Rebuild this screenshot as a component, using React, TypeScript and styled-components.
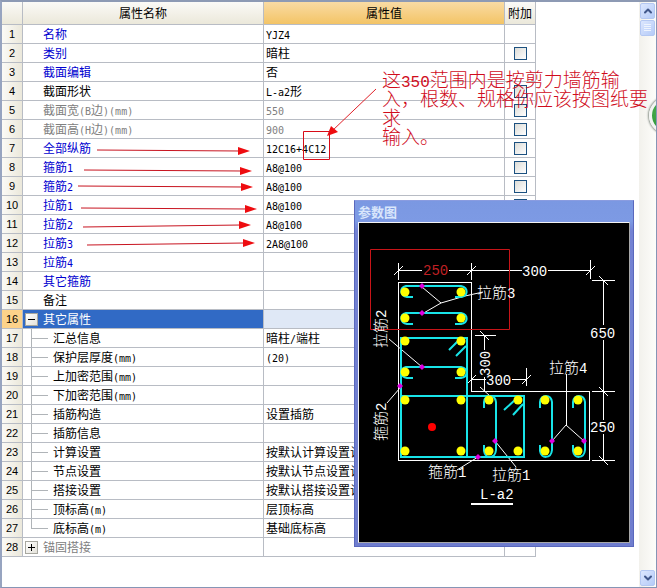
import React, { useState } from "react";
import styled, { createGlobalStyle, css } from "styled-components";
import { ChevronDown, ChevronUp } from "lucide-react";

const GlobalStyle = createGlobalStyle`
  * { box-sizing: border-box; }
  body {
    margin: 0;
    background: #fff;
    font-family: "Noto Sans CJK SC", "Liberation Sans", sans-serif;
    font-size: 12px;
    color: #000;
  }
`;

const Frame = styled.div`
  position: relative;
  display: flex;
  min-height: 100vh;
  overflow: hidden;
  border: 1px solid #8695b5;
  border-top: 2px solid #8d9ab4;
  border-left: 2px solid #97a4c0;
`;

const GridPane = styled.main`
  flex: 1;
  min-width: 0;
`;

const PropertyTable = styled.table`
  width: calc(100% - 103px);
  table-layout: fixed;
  border-spacing: 0;
  line-height: 18px;
`;

const NumberCol = styled.col`
  width: 21px;
`;

const ExtraCol = styled.col`
  width: 31px;
`;

const cellBase = css`
  height: 19px;
  padding: 0;
  border-right: 1px solid #b8bcc4;
  border-bottom: 1px solid #b8bcc4;
  white-space: nowrap;
  overflow: hidden;
  font-weight: 400;
`;

const HeadCell = styled.th<{ $active?: boolean }>`
  ${cellBase}
  height: 23px;
  background: ${(p) =>
    p.$active
      ? "linear-gradient(#f9dba4, #f3c466)"
      : "linear-gradient(#fbfaf7, #ebe8da)"};
`;

const NumberCell = styled.th<{ $active?: boolean }>`
  ${cellBase}
  background: ${(p) =>
    p.$active ? "#fcd28a" : "linear-gradient(90deg, #fbfaf6, #ebe8db)"};
  font-family: "Liberation Sans", sans-serif;
  font-size: 11px;
`;

type Tone = "blue" | "black" | "gray";
const tones: Record<Tone, string> = {
  blue: "#0000d0",
  black: "#000",
  gray: "#808080",
};

const NameCell = styled.td<{ $tone: Tone; $active?: boolean }>`
  ${cellBase}
  background: ${(p) => (p.$active ? "#316ac5" : "#fff")};
  color: ${(p) => (p.$active ? "#fff" : tones[p.$tone])};
`;

const NameLine = styled.div`
  display: flex;
  align-items: center;
  height: 18px;
`;

const Gutter = styled.span`
  display: flex;
  justify-content: center;
  flex: 0 0 20px;
  padding-right: 3px;
`;

const Branch = styled.span<{ $last?: boolean }>`
  flex: 0 0 30px;
  height: 19px;
  background:
    linear-gradient(#b0b4b8, #b0b4b8) 8px 9px / 17px 1px no-repeat,
    linear-gradient(#b0b4b8, #b0b4b8) 8px 0 / 1px ${(p) => (p.$last ? "10px" : "19px")} no-repeat;
`;

const Expander = styled.button`
  width: 13px;
  height: 13px;
  padding: 0;
  display: grid;
  place-items: center;
  border: 1px solid #a8a8a0;
  background: linear-gradient(135deg, #fff, #e4e2da);
`;

const ValueCell = styled.td<{ $tone: Tone; $active?: boolean }>`
  ${cellBase}
  padding-left: 2px;
  padding-bottom: 1px;
  line-height: 17px;
  background: ${(p) => (p.$active ? "#dfe8f6" : "#fff")};
  color: ${(p) => tones[p.$tone]};
`;

const ExtraCell = styled.td`
  ${cellBase}
`;

const CheckBox = styled.input`
  appearance: none;
  display: block;
  width: 13px;
  height: 13px;
  margin: 1px auto 0;
  border: 1px solid #1c5180;
  background: linear-gradient(135deg, #dcdcd7, #fff);
  &:checked {
    background: #1c5180;
  }
`;

const Latin = styled.span`
  font-family: "DejaVu Sans Mono", monospace;
  font-size: 10px;
  line-height: 1;
`;

function Mixed({ text }: { text: string }) {
  const parts = text.split(/([\x20-\x7e]+)/).filter(Boolean);
  return (
    <>
      {parts.map((part, i) =>
        /^[\x20-\x7e]/.test(part) ? (
          <Latin key={i}>{part}</Latin>
        ) : (
          <React.Fragment key={i}>{part}</React.Fragment>
        ),
      )}
    </>
  );
}

const ScrollBar = styled.aside`
  flex: 0 0 17px;
  display: flex;
  flex-direction: column;
  background: linear-gradient(90deg, #f2f1ec, #fdfdfa);
`;

const ScrollButton = styled.button`
  width: 15px;
  height: 16px;
  margin: 1px;
  padding: 0;
  display: grid;
  place-items: center;
  color: #41578a;
  border: 1px solid #b4c8f2;
  border-radius: 2px;
  background: linear-gradient(135deg, #dce7fe, #b5cbf8);
`;

const ScrollThumb = styled(ScrollButton)`
  margin-top: 0;
`;

const ScrollTrack = styled.div`
  flex: 1;
`;

const Overlay = styled.svg`
  position: absolute;
  left: -2px;
  top: -2px;
  pointer-events: none;
`;

const Note = styled.p`
  position: absolute;
  left: 380px;
  top: 67px;
  margin: 0;
  font-size: 19px;
  font-weight: 300;
  line-height: 19px;
  color: #d00c1c;
  white-space: nowrap;
`;

const NoteLine = styled.span`
  display: block;
  height: 19px;
`;

const NoteNumber = styled.span`
  font-family: "Liberation Mono", monospace;
  font-size: 16px;
  line-height: 0;
`;

const FloatButton = styled.button`
  position: absolute;
  right: -30px;
  top: 95px;
  width: 37px;
  height: 37px;
  padding: 0;
  border: 3px solid #f2f4f2;
  border-radius: 50%;
  background: radial-gradient(circle at 40% 35%, #55b556, #1f8a2c);
  box-shadow: 0 0 2px 1px #8c948c;
`;

const Dialog = styled.section`
  position: absolute;
  left: 352px;
  top: 198px;
  width: 280px;
  padding: 0 3px 3px;
  border: 1px solid #5a68bd;
  border-top-color: #8a9ce0;
  background: linear-gradient(#7b98e2, #7d9ae4 20px, #7382d3 30px, #6f7dce);
`;

const DialogTitle = styled.h2`
  margin: 0;
  height: 21px;
  font-size: 13px;
  font-weight: 700;
  line-height: 22px;
  color: #d9e6fb;
`;

const Drawing = styled.svg`
  display: block;
  width: 100%;
  background: #000;
  border-top: 1px solid #f4f4f4;
  border-left: 1px solid #f4f4f4;
  border-right: 1px solid #a8a8a8;
  border-bottom: 1px solid #a8a8a8;
  font-family: "Liberation Mono", "Noto Sans CJK SC", monospace;
  font-weight: 300;
`;

type Row = {
  name: string;
  value?: string;
  tone?: Tone;
  check?: boolean;
  kind?: "group" | "child" | "last";
};

const rows: Row[] = [
  { name: "名称", value: "YJZ4", tone: "blue" },
  { name: "类别", value: "暗柱", tone: "blue", check: true },
  { name: "截面编辑", value: "否", tone: "blue" },
  { name: "截面形状", value: "L-a2形", check: true },
  { name: "截面宽(B边)(mm)", value: "550", tone: "gray", check: true },
  { name: "截面高(H边)(mm)", value: "900", tone: "gray", check: true },
  { name: "全部纵筋", value: "12C16+4C12", tone: "blue", check: true },
  { name: "箍筋1", value: "A8@100", tone: "blue", check: true },
  { name: "箍筋2", value: "A8@100", tone: "blue", check: true },
  { name: "拉筋1", value: "A8@100", tone: "blue", check: true },
  { name: "拉筋2", value: "A8@100", tone: "blue", check: true },
  { name: "拉筋3", value: "2A8@100", tone: "blue", check: true },
  { name: "拉筋4", tone: "blue", check: true },
  { name: "其它箍筋", tone: "blue" },
  { name: "备注", check: true },
  { name: "其它属性", kind: "group" },
  { name: "汇总信息", value: "暗柱/端柱", kind: "child" },
  { name: "保护层厚度(mm)", value: "(20)", kind: "child" },
  { name: "上加密范围(mm)", kind: "child" },
  { name: "下加密范围(mm)", kind: "child" },
  { name: "插筋构造", value: "设置插筋", kind: "child" },
  { name: "插筋信息", kind: "child" },
  { name: "计算设置", value: "按默认计算设置计算", kind: "child" },
  { name: "节点设置", value: "按默认节点设置计算", kind: "child" },
  { name: "搭接设置", value: "按默认搭接设置计算", kind: "child" },
  { name: "顶标高(m)", value: "层顶标高", kind: "child" },
  { name: "底标高(m)", value: "基础底标高", kind: "last" },
  { name: "锚固搭接", tone: "gray", kind: "group" },
];

function PropertyRow({ row, index, active }: { row: Row; index: number; active: boolean }) {
  const [checked, setChecked] = useState(false);
  const tone = row.tone ?? "black";
  return (
    <tr>
      <NumberCell scope="row" $active={active}>{index}</NumberCell>
      <NameCell $tone={tone} $active={active}>
        <NameLine>
          {row.kind === "child" || row.kind === "last" ? (
            <Branch $last={row.kind === "last"} />
          ) : (
            <Gutter>
              {row.kind === "group" && (
                <Expander aria-label={row.name} aria-expanded={active}>
                  <svg width="9" height="9" stroke="#000" shapeRendering="crispEdges">
                    <path d={active ? "M1 4.5H8" : "M1 4.5H8M4.5 1V8"} />
                  </svg>
                </Expander>
              )}
            </Gutter>
          )}
          <span><Mixed text={row.name} /></span>
        </NameLine>
      </NameCell>
      <ValueCell $tone={tone === "gray" ? "gray" : "black"} $active={active}>
        <Mixed text={row.value ?? ""} />
      </ValueCell>
      <ExtraCell>
        {row.check && (
          <CheckBox
            type="checkbox"
            aria-label={`附加 ${row.name}`}
            checked={checked}
            onChange={(e) => setChecked(e.target.checked)}
          />
        )}
      </ExtraCell>
    </tr>
  );
}

const arrows = [
  [97, 150, 250, 151],
  [84, 170, 252, 171],
  [78, 186, 253, 187],
  [81, 208, 257, 209],
  [83, 227, 251, 225],
  [87, 245, 255, 243],
];

function Annotations() {
  return (
    <Overlay width="657" height="588" viewBox="0 0 657 588">
      {arrows.map(([x1, y1, x2, y2]) => (
        <g key={y1}>
          <path d={`M${x1} ${y1}L${x2 - 10} ${y2}`} stroke="#c81420" />
          <path d={`M${x2} ${y2}l-12 -4v8z`} fill="#ee0c10" />
        </g>
      ))}
      <path d="M376 89L332 131" stroke="#e02028" />
      <path d="M327 136L331 126L338 132z" fill="#ee0c10" />
      <path d="M303.500 131.500H329.500V159.500H303.500z" fill="none" stroke="#d80c18" />
    </Overlay>
  );
}

const bars = [
  [405, 292], [461, 292], [405, 318], [461, 318],
  [405, 341], [461, 341], [405, 372], [461, 372],
  [405, 400], [461, 400], [489, 400], [518, 400], [545, 400], [578, 400],
  [405, 451], [461, 451], [489, 451], [518, 451], [545, 451], [578, 451],
];
const marks = [
  [422, 286], [422, 313], [422, 367], [400, 386],
  [495, 441], [478, 457], [552, 441], [584, 441],
];

const hTie = (y: number) =>
  `M413 ${y + 11}H407C400 ${y + 10} 399 ${y + 2} 406 ${y}H461C469 ${y + 2} 468 ${y + 10} 461 ${y + 11}H455`;
const vTie = (x: number) =>
  `M${x} 408V402C${x + 1} 394 ${x + 11} 394 ${x + 12} 402V450C${x + 11} 459 ${x + 1} 459 ${x} 451V445`;

function SectionDrawing() {
  return (
    <Drawing viewBox="359 223 270 319" role="img" aria-label="L-a2">
      <g fill="none" stroke="#fff" shapeRendering="crispEdges">
        <path d="M398.500 282.500H471.500V391.500H589.500V460.500H398.500z" />
        <path d="M398.500 263V280M398 270.500H422M449 270.500H522M548 270.500H590M471.500 263V280M590.500 260V279" />
        <path d="M592 280.500H615M592 391.500H615M592 460.500H615M603.500 280V325M603.500 340V420M603.500 434V460" />
        <path d="M475 335.500H496M484.500 336V350M484.500 377V391M471 379.500H486M512 379.500H526M526.500 368V386" />
        <path d="M566.500 374V425" />
      </g>
      <g fill="none" stroke="#fff">
        <path d="M394 275l9-9M467 275l9-9M586 275l9-9M599 276l9 9M599 387l9 9M599 456l9 9M480 331l9 9M480 387l10 9M467 384l9-9M522 384l9-9" />
        <path d="M422 287L441 303L422 314M441 303L465 296L483 292M389 339L422 367M387 403L400 388M457 470L478 457M516 467L495 441M552 441L566 425L584 441" />
      </g>
      <g fill="none" stroke="#18e4e8" strokeWidth="2">
        <path d={hTie(286)} />
        <path d={hTie(313)} />
        <path d={hTie(367)} />
        <path d={vTie(484)} />
        <path d={vTie(540)} />
        <path d={vTie(573)} />
        <path d="M401 338H467V457H401zM401 396H524V457H401" />
        <path d="M449 350L459 340M456 356L466 346M504 410L516 399M513 415L523 404" />
      </g>
      <g fill="#ffff00">
        {bars.map(([x, y]) => <circle key={`${x}-${y}`} cx={x} cy={y} r="4.500" />)}
      </g>
      <circle cx="432" cy="427" r="4" fill="#f00" />
      <g fill="#e000e0">
        {marks.map(([x, y]) => <path key={`${x}-${y}`} d={`M${x} ${y - 3}l3 3l-3 3l-3 -3z`} />)}
      </g>
      <path d="M370.500 249.500H509.500V329.500H370.500z" fill="none" stroke="#c81418" />
      <g fill="#fff" fontSize="14">
        <text x="423" y="275" fill="#c02024">250</text>
        <text x="522" y="276">300</text>
        <text x="590" y="338">650</text>
        <text x="590" y="432">250</text>
        <text x="486" y="385">300</text>
        <text transform="translate(490 376) rotate(-90)">300</text>
        <text x="480" y="499">L-a2</text>
      </g>
      <g fill="#fff" fontSize="15">
        <text x="477" y="298">拉筋<tspan fontSize="14">3</tspan></text>
        <text x="549" y="373">拉筋<tspan fontSize="14">4</tspan></text>
        <text x="428" y="477">箍筋<tspan fontSize="14">1</tspan></text>
        <text x="492" y="480">拉筋<tspan fontSize="14">1</tspan></text>
        <text transform="translate(386 348) rotate(-90)">拉筋<tspan fontSize="14">2</tspan></text>
        <text transform="translate(386 441) rotate(-90)">箍筋<tspan fontSize="14">2</tspan></text>
      </g>
      <path d="M471 504H513" stroke="#fff" strokeWidth="2" />
    </Drawing>
  );
}

export default function App() {
  return (
    <>
      <GlobalStyle />
      <Frame>
        <GridPane>
          <PropertyTable>
            <colgroup>
              <NumberCol />
              <col />
              <col />
              <ExtraCol />
            </colgroup>
            <thead>
              <tr>
                <HeadCell />
                <HeadCell scope="col">属性名称</HeadCell>
                <HeadCell scope="col" $active>属性值</HeadCell>
                <HeadCell scope="col">附加</HeadCell>
              </tr>
            </thead>
            <tbody>
              {rows.map((row, i) => (
                <PropertyRow key={row.name} row={row} index={i + 1} active={i === 15} />
              ))}
            </tbody>
          </PropertyTable>
        </GridPane>
        <ScrollBar>
          <ScrollButton aria-label="向上滚动"><ChevronUp size={12} strokeWidth={4} /></ScrollButton>
          <ScrollThumb aria-label="滚动条">
            <svg width="7" height="8" stroke="#eef4fe" shapeRendering="crispEdges">
              <path d="M0 .5H7M0 2.500H7M0 4.500H7M0 6.500H7" />
            </svg>
          </ScrollThumb>
          <ScrollTrack />
          <ScrollButton aria-label="向下滚动"><ChevronDown size={12} strokeWidth={4} /></ScrollButton>
        </ScrollBar>
        <Annotations />
        <Note>
          <NoteLine>这<NoteNumber>350</NoteNumber>范围内是按剪力墙筋输</NoteLine>
          <NoteLine>入，根数、规格你应该按图纸要</NoteLine>
          <NoteLine>求</NoteLine>
          <NoteLine>输入。</NoteLine>
        </Note>
        <FloatButton aria-label="悬浮球" />
        <Dialog>
          <DialogTitle>参数图</DialogTitle>
          <SectionDrawing />
        </Dialog>
      </Frame>
    </>
  );
}
